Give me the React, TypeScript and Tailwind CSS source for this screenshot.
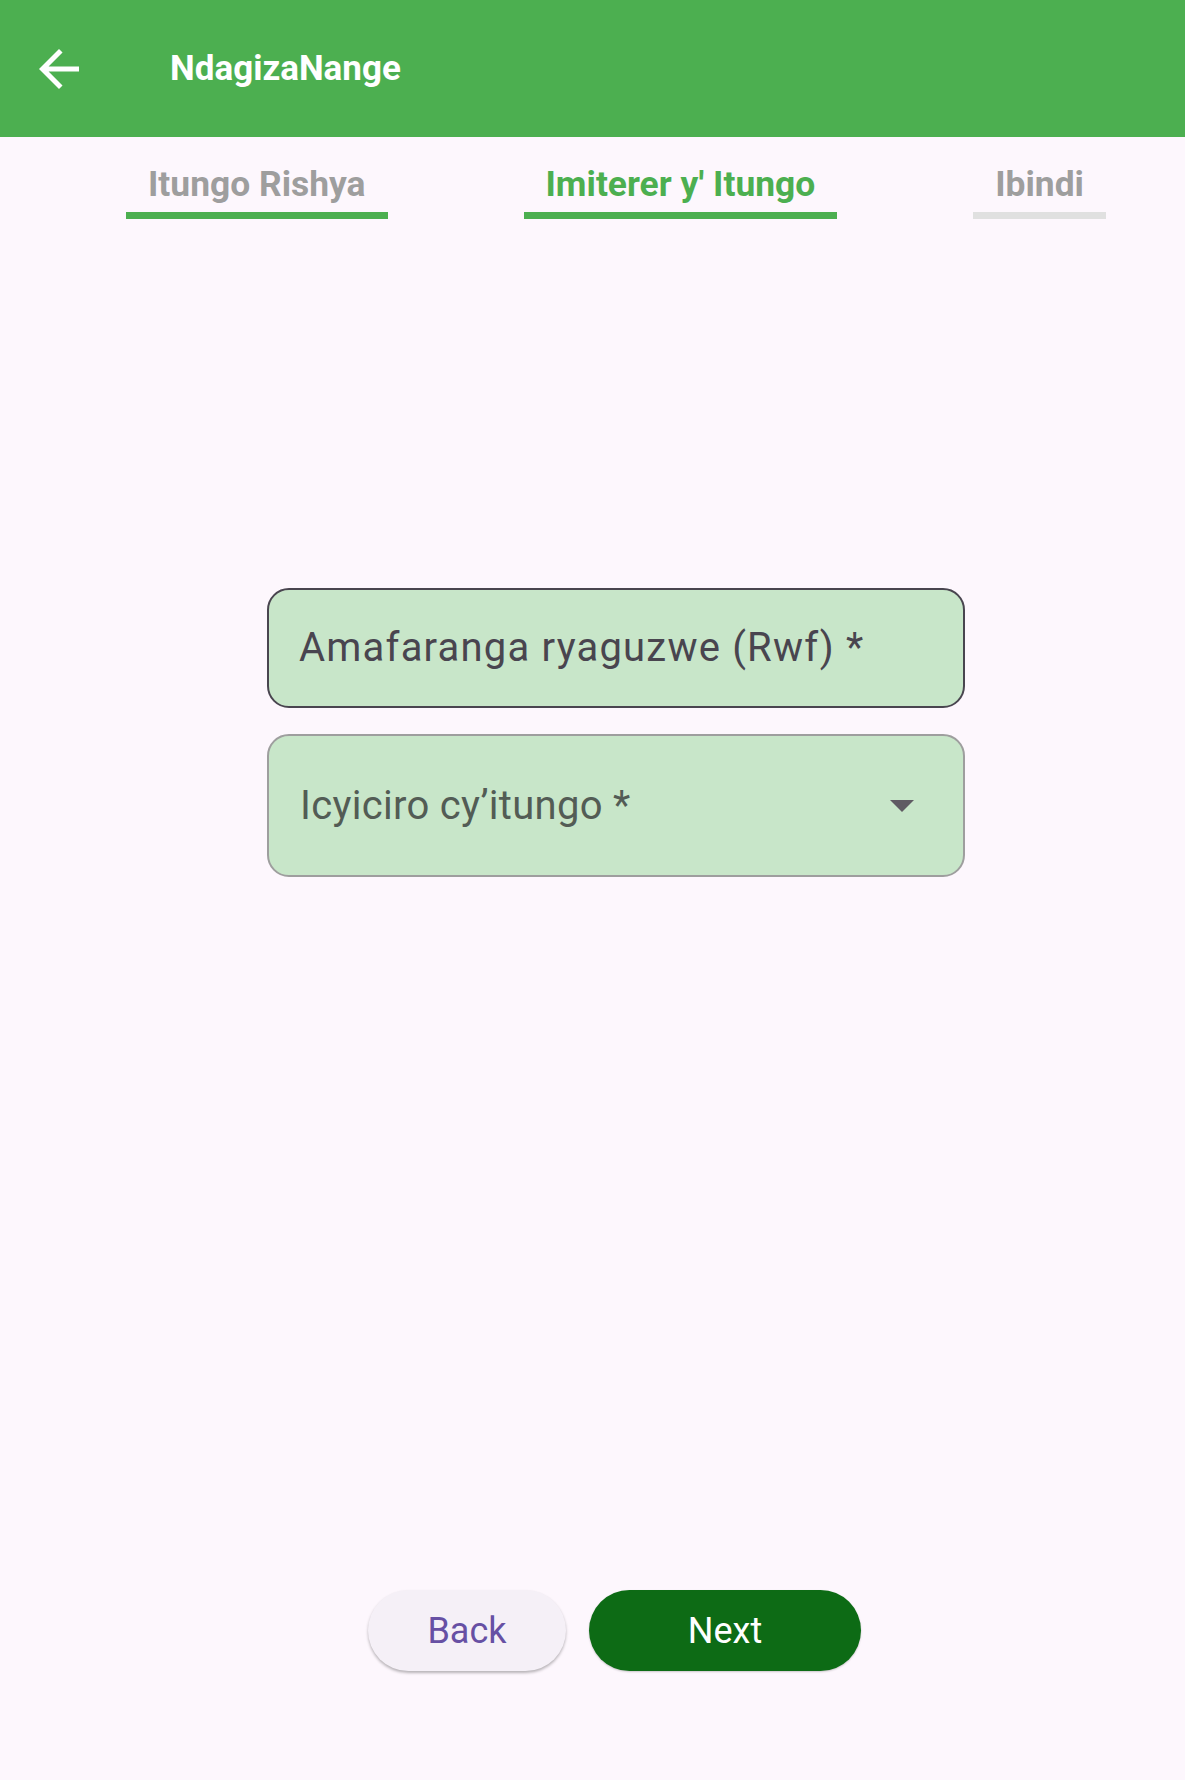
const tabs = [
  { label: "Itungo Rishya", done: true, active: false },
  { label: "Imiterer y' Itungo", done: true, active: true },
  { label: "Ibindi", done: false, active: false },
]

function BackArrow() {
  return (
    <svg width="40" height="40" viewBox="4 4 16 16" fill="white">
      <path d="M20 11H7.83l5.59-5.59L12 4l-8 8 8 8 1.41-1.41L7.83 13H20v-2z" />
    </svg>
  )
}

export default function App() {
  return (
    <div
      className="w-[1185px] min-h-[1780px] bg-[#fdf7fd] flex flex-col"
      style={{ fontFamily: "Roboto, 'Noto Sans', sans-serif" }}
    >
      {/* app bar */}
      <div className="h-[137px] bg-[#4caf50] flex items-center shrink-0">
        <div className="ml-[39px] w-[40px] h-[40px]">
          <BackArrow />
        </div>
        <h1 className="ml-[91px] text-[35px] leading-[44px] font-bold text-white">
          NdagizaNange
        </h1>
      </div>

      {/* step tabs */}
      <div className="flex pl-[126px] gap-[136px] pt-[25px]">
        {tabs.map((tab) => (
          <div key={tab.label} className="flex flex-col items-stretch">
            <div
              className={
                "px-[22px] text-center text-[35.4px] leading-[44px] font-bold whitespace-nowrap " +
                (tab.active ? "text-[#4caf50]" : "text-[#9e9e9e]")
              }
            >
              {tab.label}
            </div>
            <div
              className={
                "mt-[6px] h-[7px] " + (tab.done ? "bg-[#4caf50]" : "bg-[#e0e0e0]")
              }
            />
          </div>
        ))}
      </div>

      {/* form fields */}
      <div className="ml-[267px] w-[698px] mt-[369px] flex flex-col gap-[26px]">
        <div className="h-[120px] rounded-[22px] border-2 border-[#49454f] bg-[#c8e6c9] flex items-center pl-[30px]">
          <span className="text-[40px] tracking-[1.2px] text-[#49454f]">Amafaranga ryaguzwe (Rwf) *</span>
        </div>
        <div className="h-[143px] rounded-[22px] border-2 border-[#9e9e9e] bg-[#c8e6c9] flex items-center pl-[31px] pr-[49px]">
          <span className="flex-1 text-[40px] tracking-[0.3px] text-[#535c55]">Icyiciro cy’itungo *</span>
          <svg width="24" height="12" viewBox="0 0 24 12">
            <path d="M0 0h24L12 12z" fill="#5f5b63" />
          </svg>
        </div>
      </div>

      {/* actions */}
      <div className="ml-[368px] mt-[713px] flex gap-[23px]">
        <button className="w-[198px] h-[81px] rounded-full bg-[#f5f0f7] text-[#6750a4] text-[36px] shadow-[0_2px_3px_rgba(0,0,0,0.28)]">
          Back
        </button>
        <button className="w-[272px] h-[81px] rounded-full bg-[#0d6b15] text-white text-[36px] shadow-[0_1px_2px_rgba(0,0,0,0.2)]">
          Next
        </button>
      </div>
    </div>
  )
}
